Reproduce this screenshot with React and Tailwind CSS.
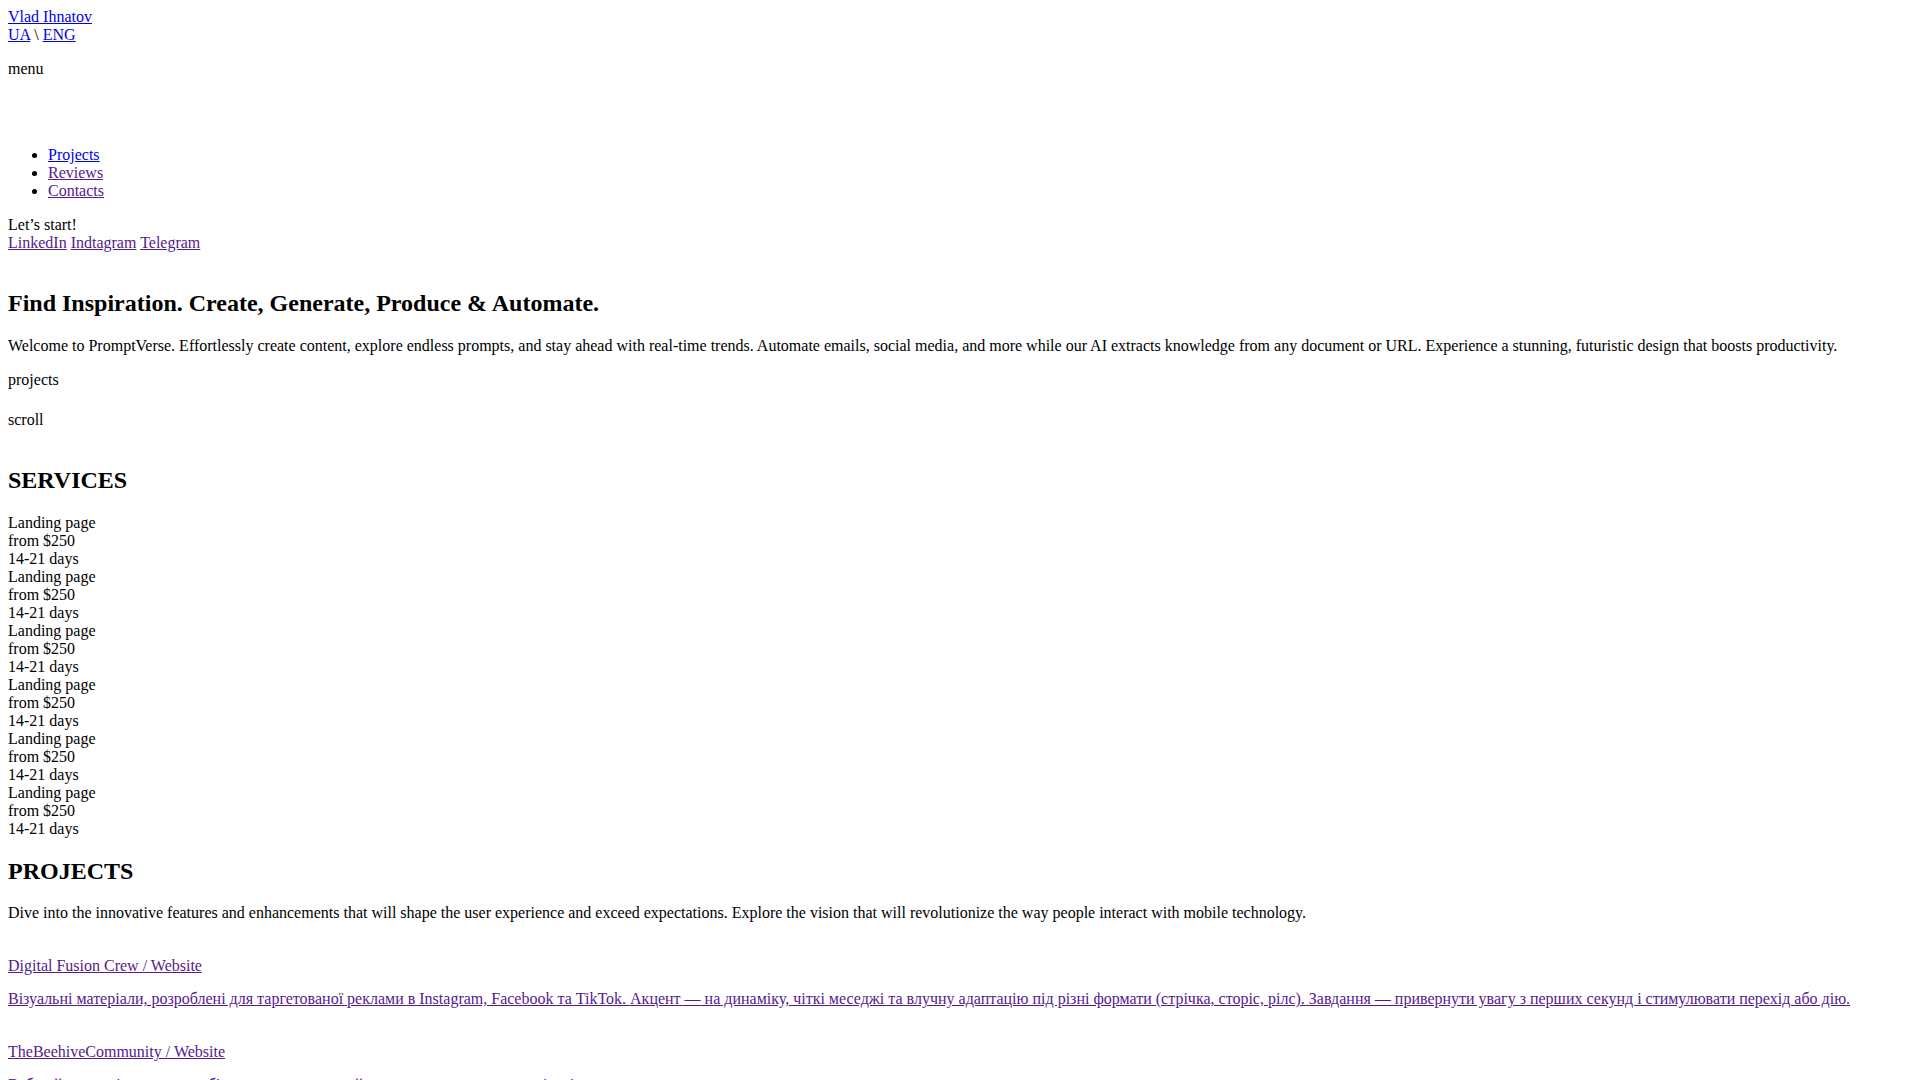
import React from "react";

const BLUE = "text-[#0000EE] underline";
const PURPLE = "text-[#551A8B] underline";

const services = Array.from({ length: 6 }, () => ({
  title: "Landing page",
  price: "from $250",
  term: "14-21 days",
}));

const projects = [
  {
    title: "Digital Fusion Crew / Website",
    desc: "Візуальні матеріали, розроблені для таргетованої реклами в Instagram, Facebook та TikTok. Акцент — на динаміку, чіткі меседжі та влучну адаптацію під різні формати (стрічка, сторіс, рілс). Завдання — привернути увагу з перших секунд і стимулювати перехід або дію.",
  },
  {
    title: "TheBeehiveCommunity / Website",
    desc: "Веб-сайт для спільноти, що об'єднує творчих людей, з акцентом на зручну навігацію, чисту структуру та швидке завантаження.",
  },
  {
    title: "PromptVerse / Web App",
    desc: "Платформа для генерації контенту та автоматизації, створена з футуристичним дизайном і продуманою взаємодією.",
  },
];

export default function App() {
  return (
    <div className="h-screen overflow-y-scroll bg-white">
      <div className="p-2 font-['Liberation_Serif','Times_New_Roman',serif] text-[16px] leading-[normal] text-black">
        <header>
          <div>
            <a href="#" className={BLUE}>Vlad Ihnatov</a>
          </div>
          <div>
            <a href="#" className={BLUE}>UA</a> \ <a href="#" className={BLUE}>ENG</a>
          </div>
          <div className="mt-4">menu</div>
          <ul className="mt-[68px] list-disc pl-10">
            <li><a href="#" className={BLUE}>Projects</a></li>
            <li><a href="#" className={PURPLE}>Reviews</a></li>
            <li><a href="#" className={PURPLE}>Contacts</a></li>
          </ul>
          <div className="mt-4">Let’s start!</div>
          <div>
            <a href="#" className={PURPLE}>LinkedIn</a>{" "}
            <a href="#" className={PURPLE}>Indtagram</a>{" "}
            <a href="#" className={PURPLE}>Telegram</a>
          </div>
        </header>

        <section>
          <h2 className="mt-[38px] text-[24px] font-bold">
            Find Inspiration. Create, Generate, Produce &amp; Automate.
          </h2>
          <p className="mt-5">
            Welcome to PromptVerse. Effortlessly create content, explore endless prompts, and stay ahead with real-time trends. Automate emails, social media, and more while our AI extracts knowledge from any document or URL. Experience a stunning, futuristic design that boosts productivity.
          </p>
          <p className="mt-4">projects</p>
          <p className="mt-[22px]">scroll</p>
        </section>

        <section>
          <h2 className="mt-[38px] text-[24px] font-bold">SERVICES</h2>
          <div className="mt-5">
            {services.map((s, i) => (
              <div key={i}>
                <div>{s.title}</div>
                <div>{s.price}</div>
                <div>{s.term}</div>
              </div>
            ))}
          </div>
        </section>

        <section>
          <h2 className="mt-[20px] text-[24px] font-bold">PROJECTS</h2>
          <p className="mt-[19px]">
            Dive into the innovative features and enhancements that will shape the user experience and exceed expectations. Explore the vision that will revolutionize the way people interact with mobile technology.
          </p>
          {projects.map((p, i) => (
            <a key={i} href="#" className="block text-[#551A8B]">
              <p className="mt-[35px] underline">{p.title}</p>
              <p className="mt-[15px] underline">{p.desc}</p>
            </a>
          ))}
        </section>
      </div>
    </div>
  );
}
